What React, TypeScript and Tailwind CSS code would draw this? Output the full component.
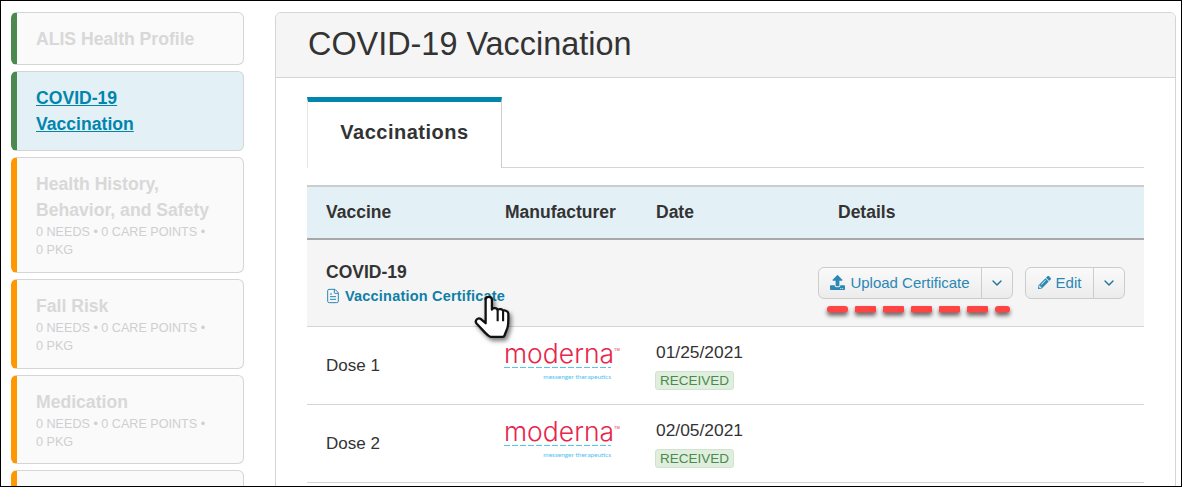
import { ChevronDown, FileText } from "lucide-react";
import { FaUpload, FaPencilAlt } from "react-icons/fa";

const font = "font-['Liberation_Sans',Arial,sans-serif]";

function Card({ title, color, active, sub, h }: { title?: string; color: string; active?: boolean; sub?: boolean; h: string }) {
  return (
    <div
      className={`shrink-0 rounded-[6px] border border-[#d5d5d5] border-l-[6px] pl-[19px] pr-[32px] pt-[12.500px] ${h} ${color} ${active ? "bg-[#e3f0f5]" : "bg-[#fafafa]"}`}
    >
      {title && <div className={`text-[17.6px] font-bold leading-[26px] ${active ? "text-[#0085ad] underline" : "text-[#d8d8d8]"}`}>{title}</div>}
      {sub && <div className="text-[12.6px] leading-[18px] text-[#cfcfcf] font-normal">0 NEEDS • 0 CARE POINTS • 0 PKG</div>}
    </div>
  );
}

function Moderna() {
  return (
    <div className="w-[112px] flex flex-col -mt-[10px] -ml-[1px]">
      <div className="flex items-start">
        <span className="font-['Inter',sans-serif] text-[26.5px] leading-[26px] font-light text-[#e6264c] whitespace-nowrap">moderna</span>
        <span className="text-[4px] leading-[8px] mt-[6px] text-[#e6264c]">TM</span>
      </div>
      <div className="mt-[1px] mr-[5px] h-[1px] bg-[repeating-linear-gradient(90deg,#4fc8f2_0,#4fc8f2_6px,transparent_6px,transparent_8px)]" />
      <div className="mt-[5px] text-right pr-[5px] font-['Lato',sans-serif] text-[6.5px] leading-[8px] text-[#4fc3f0] whitespace-nowrap">messenger therapeutics</div>
    </div>
  );
}

function Dose({ n, date }: { n: number; date: string }) {
  return (
    <div className="flex h-[78px] border-b border-[#d5d5d5] items-center">
      <div className="w-[179px] pl-[19px] text-[17px] text-[#333]">Dose {n}</div>
      <div className="w-[151px] pl-[19px]"><Moderna /></div>
      <div className="pl-[19px]">
        <div className="-mt-[1px] text-[17.4px] leading-[22px] text-[#333]">{date}</div>
        <div className="mt-[8px] -ml-[1px] w-fit h-[19px] rounded-[3px] border border-[#cfe3cf] bg-[#dfeedd] px-[4px] text-[13.5px] leading-[17px] text-[#4a8a4f]">RECEIVED</div>
      </div>
    </div>
  );
}

function SplitButton({ icon, label, mainW }: { icon: React.ReactNode; label: string; mainW: string }) {
  return (
    <div className="flex h-[32px] rounded-[6px] border border-[#cccccc] bg-gradient-to-b from-[#fafafa] to-[#ececec] text-[#2b87b5] text-[15px]">
      <div className={`flex items-center justify-center gap-[5px] border-r border-[#cccccc] ${mainW}`}>
        {icon}
        <span className="pt-[1px]">{label}</span>
      </div>
      <div className="w-[30px] flex items-center justify-center">
        <ChevronDown size={16} strokeWidth={2} className="text-[#1f6f9c]" />
      </div>
    </div>
  );
}

function Hand() {
  return (
    <svg width="40" height="46" viewBox="0 0 38 44" className="absolute left-[473px] top-[294px] drop-shadow-[2px_3px_2px_rgba(0,0,0,0.5)]">
      <path
        d="M11 4.5c0-3.5 6-3.5 6 0V14c.4-2 5-2 5.5.6.5-1.6 4.8-1.4 5.2.8.6-1 4.6-.6 5 2.2 0 4.5.2 9-.5 12.400-.6 3-2 5-3 8.500-.4 1-1 1.500-2 1.500H16c-3 0-7-6-13.500-12.500-2.500-3 1-6.500 4-4.500L11 27Z"
        fill="#fff"
        stroke="#111"
        strokeWidth="2.2"
        strokeLinejoin="round"
      />
      <path d="M22.500 15v10M27.700 16v9" stroke="#111" strokeWidth="2" fill="none" />
    </svg>
  );
}

function Dashes() {
  return (
    <svg width="190" height="16" viewBox="0 0 190 16" className="absolute left-[824px] top-[303px] drop-shadow-[0_3px_2px_rgba(0,0,0,0.6)]">
      <g fill="#ff4444">
        <rect x="2" y="2" width="21" height="6.500" rx="3" />
        <rect x="30" y="2" width="21" height="6.500" rx="1" />
        <rect x="58" y="2" width="21" height="6.500" rx="1" />
        <rect x="86" y="2" width="21" height="6.500" rx="1" />
        <rect x="114" y="2" width="21" height="6.500" rx="1" />
        <rect x="142" y="2" width="21" height="6.500" rx="1" />
        <rect x="170" y="2" width="15" height="6.500" rx="3" />
      </g>
    </svg>
  );
}

export default function App() {
  return (
    <div className={`${font} relative w-[1182px] h-[487px] overflow-hidden border border-black bg-white flex gap-[31px] pl-[10px] pr-[5px] pt-[11px]`}>
      <div className="w-[233px] shrink-0 flex flex-col gap-[6px]">
        <Card title="ALIS Health Profile" color="border-l-[#4a8a4f]" h="h-[53px]" />
        <Card title="COVID-19 Vaccination" color="border-l-[#4a8a4f]" h="h-[80px]" active />
        <Card title="Health History, Behavior, and Safety" color="border-l-[#ff9800]" h="h-[116px]" sub />
        <Card title="Fall Risk" color="border-l-[#ff9800]" h="h-[90px]" sub />
        <Card title="Medication" color="border-l-[#ff9800]" h="h-[89px]" sub />
        <Card color="border-l-[#ff9800]" h="h-[60px]" />
      </div>

      <div className="flex-1 h-[600px] rounded-t-[6px] border border-[#d5d5d5] bg-white">
        <div className="h-[65px] bg-[#f5f5f5] border-b border-[#d5d5d5] rounded-t-[6px] pl-[32px] pt-[10px] text-[32.4px] leading-[42px] text-[#333]">COVID-19 Vaccination</div>
        <div className="pl-[31px] pr-[31px] pt-[19px]">
          <div className="flex h-[71px] border-b border-[#d5d5d5]">
            <div className="w-[195px] -mb-px bg-white border-t-[5px] border-t-[#0085ad] border-r border-r-[#cccccc] border-l border-l-[#e5e5e5] flex items-center justify-center pb-[6px] text-[20px] font-bold text-[#333] tracking-[0.5px]">Vaccinations</div>
          </div>
          <div className="mt-[17px] flex h-[55px] items-center bg-[#e3f0f5] border-t-2 border-t-[#cccccc] border-b-2 border-b-[#a8a8a8] text-[17.5px] font-bold text-[#333]">
            <div className="w-[179px] pl-[19px]">Vaccine</div>
            <div className="w-[151px] pl-[19px]">Manufacturer</div>
            <div className="w-[182px] pl-[19px]">Date</div>
            <div className="pl-[19px]">Details</div>
          </div>
          <div className="flex h-[87px] items-center justify-between bg-[#f5f5f5] border-b border-[#d5d5d5] pl-[19px] pr-[19px]">
            <div className="pt-[1px]">
              <div className="text-[17.500px] leading-[22px] font-bold text-[#333]">COVID-19</div>
              <div className="mt-[3px] flex items-center gap-[4px] text-[14.500px] leading-[20px] font-bold text-[#0f7fa8] tracking-[0.2px]">
                <FileText size={16} strokeWidth={1.5} className="text-[#2b87b5] -ml-[1px]" />
                <span>Vaccination Certificate</span>
              </div>
            </div>
            <div className="flex gap-[12px] mb-[1px]">
              <SplitButton icon={<FaUpload size={15} />} label="Upload Certificate" mainW="w-[163px]" />
              <SplitButton icon={<FaPencilAlt size={13} />} label="Edit" mainW="w-[68px]" />
            </div>
          </div>
          <Dose n={1} date="01/25/2021" />
          <Dose n={2} date="02/05/2021" />
        </div>
      </div>

      <Dashes />
      <Hand />
    </div>
  );
}
